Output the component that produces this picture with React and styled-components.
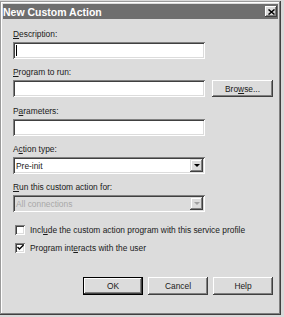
import React from "react";
import styled, { createGlobalStyle } from "styled-components";

const GlobalStyle = createGlobalStyle`
	html, body {
		margin: 0;
		padding: 0;
		background: #d9d9d9;
		font-family: "Liberation Sans", Arial, sans-serif;
	}
	* {
		box-sizing: border-box;
	}
`;

const Window = styled.div`
	width: 281px;
	height: 314px;
	margin-top: 1px;
	padding: 2px;
	background-color: #dcdcdc;
	box-shadow: inset -1px -1px #404040, inset 1px 1px #9a9a9a,
		inset -2px -2px #808080, inset 2px 2px #ffffff;

	display: flex;
	flex-direction: column;
`;

const TitleBar = styled.div`
	height: 15px;
	margin: 1px 1px 0 1px;
	padding: 0 1px 0 0;
	background-color: #6e6e6e;

	display: flex;
	align-items: center;
	justify-content: space-between;
`;

const Title = styled.span`
	color: #ffffff;
	font-size: 10.5px;
	font-weight: 700;
`;

const CloseButton = styled.button`
	width: 12px;
	height: 11px;
	padding: 0;
	border: none;
	background-color: #dcdcdc;
	box-shadow: inset -1px -1px #404040, inset 1px 1px #ffffff,
		inset -2px -2px #808080;

	display: flex;
	align-items: center;
	justify-content: center;
`;

const Content = styled.div`
	padding: 9px 6px 0 11px;
	display: flex;
	flex-direction: column;
`;

const Field = styled.div`
	margin-top: ${(p) => p.$top || 0}px;
	display: flex;
	flex-direction: column;
`;

const Label = styled.label`
	height: 13px;
	margin-bottom: 1px;
	font-size: 8.4px;
	line-height: 13px;
	color: #1a1a1a;
`;

const Key = styled.span`
	text-decoration: underline;
`;

const Row = styled.div`
	display: flex;
	align-items: center;
	gap: 7px;
`;

const TextBox = styled.div`
	width: 192px;
	height: 17px;
	padding: 2px 3px;
	background-color: ${(p) => (p.$disabled ? "#dcdcdc" : "#ffffff")};
	box-shadow: inset 1px 1px #808080, inset -1px -1px #ffffff,
		inset 2px 2px #404040, inset -2px -2px #dcdcdc;

	display: flex;
	align-items: center;
`;

const Caret = styled.span`
	width: 1px;
	height: 11px;
	background-color: #000000;
`;

const SelectBox = styled(TextBox)`
	padding: 2px 2px 2px 3px;
	justify-content: space-between;
`;

const SelectText = styled.span`
	font-size: 8.4px;
	color: ${(p) => (p.$disabled ? "#a8a8a8" : "#1a1a1a")};
`;

const ArrowButton = styled.div`
	width: 13px;
	height: 13px;
	background-color: #dcdcdc;
	box-shadow: inset -1px -1px #404040, inset 1px 1px #dcdcdc,
		inset -2px -2px #808080, inset 2px 2px #ffffff;

	display: flex;
	align-items: center;
	justify-content: center;
`;

const Arrow = styled.span`
	width: 0;
	height: 0;
	border-left: 3px solid transparent;
	border-right: 3px solid transparent;
	border-top: 3px solid ${(p) => (p.$disabled ? "#a0a0a0" : "#000000")};
`;

const PushButton = styled.button`
	width: ${(p) => p.$width || 60}px;
	height: ${(p) => p.$height || 18}px;
	padding: 0;
	border: none;
	background-color: #dcdcdc;
	font-family: "Liberation Sans", Arial, sans-serif;
	font-size: 8.4px;
	color: #1a1a1a;
	box-shadow: ${(p) =>
		p.$default
			? "inset 1px 1px #000000, inset -1px -1px #000000, inset -2px -2px #404040, inset 2px 2px #ffffff, inset -3px -3px #808080"
			: "inset -1px -1px #404040, inset 1px 1px #ffffff, inset -2px -2px #808080"};
`;

const CheckRow = styled.div`
	margin-top: ${(p) => p.$top || 0}px;
	height: 13px;
	display: flex;
	align-items: center;
	gap: 5px;
	font-size: 8.4px;
	color: #1a1a1a;
`;

const CheckBox = styled.span`
	width: 10px;
	height: 10px;
	margin-left: 2px;
	background-color: #ffffff;
	box-shadow: inset 1px 1px #808080, inset -1px -1px #ffffff,
		inset 2px 2px #404040, inset -2px -2px #dcdcdc;

	display: flex;
	align-items: center;
	justify-content: center;
`;

const ButtonRow = styled.div`
	margin-top: 23px;
	display: flex;
	justify-content: flex-end;
	gap: 5px;
`;

const Check = () => (
	<svg width="7" height="7" viewBox="0 0 7 7">
		<path d="M0.5 3 L2.5 5 L6.5 1" stroke="#000" strokeWidth="1.4" fill="none" />
	</svg>
);

const App = () => {
	return (
		<>
			<GlobalStyle />
			<Window>
				<TitleBar>
					<Title>New Custom Action</Title>
					<CloseButton>
						<svg width="7" height="6" viewBox="0 0 7 6">
							<path d="M0.5 0.5 L6.5 5.5 M6.5 0.5 L0.5 5.5" stroke="#000" strokeWidth="1.5" />
						</svg>
					</CloseButton>
				</TitleBar>
				<Content>
					<Field>
						<Label>
							<Key>D</Key>escription:
						</Label>
						<TextBox>
							<Caret />
						</TextBox>
					</Field>
					<Field $top={7}>
						<Label>
							<Key>P</Key>rogram to run:
						</Label>
						<Row>
							<TextBox />
							<PushButton $width={61} $height={17}>
								Bro<Key>w</Key>se...
							</PushButton>
						</Row>
					</Field>
					<Field $top={8}>
						<Label>
							P<Key>a</Key>rameters:
						</Label>
						<TextBox />
					</Field>
					<Field $top={7}>
						<Label>
							A<Key>c</Key>tion type:
						</Label>
						<SelectBox>
							<SelectText>Pre-init</SelectText>
							<ArrowButton>
								<Arrow />
							</ArrowButton>
						</SelectBox>
					</Field>
					<Field $top={7}>
						<Label>
							<Key>R</Key>un this custom action for:
						</Label>
						<SelectBox $disabled>
							<SelectText $disabled>All connections</SelectText>
							<ArrowButton>
								<Arrow $disabled />
							</ArrowButton>
						</SelectBox>
					</Field>
					<CheckRow $top={11}>
						<CheckBox />
						<span>
							Incl<Key>u</Key>de the custom action program with this service profile
						</span>
					</CheckRow>
					<CheckRow $top={5}>
						<CheckBox>
							<Check />
						</CheckBox>
						<span>
							Program int<Key>e</Key>racts with the user
						</span>
					</CheckRow>
					<ButtonRow>
						<PushButton $default>OK</PushButton>
						<PushButton>Cancel</PushButton>
						<PushButton>Help</PushButton>
					</ButtonRow>
				</Content>
			</Window>
		</>
	);
};

export default App;
